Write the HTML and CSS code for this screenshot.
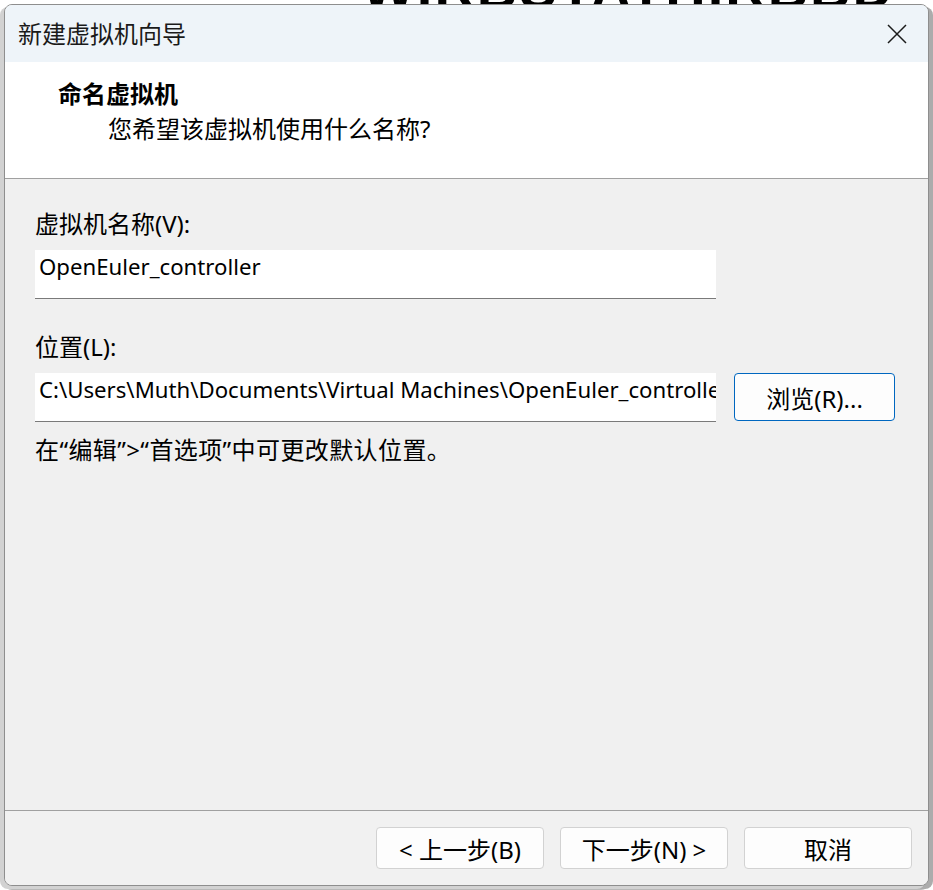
FILE: index.html
```html
<!DOCTYPE html>
<html lang="zh-CN">
<head>
<meta charset="utf-8">
<title>新建虚拟机向导</title>
<link rel="stylesheet" href="styles.css">
</head>
<body>
<div class="behind" aria-hidden="true">WIRBSTATHIRBBD</div>
<div class="window">
  <div class="titlebar">
    <span class="title">新建虚拟机向导</span>
    <svg class="close" width="20" height="20" viewBox="0 0 20 20"><path d="M1 1L19 19M19 1L1 19" stroke="#1b1b1b" stroke-width="1.5" fill="none"/></svg>
  </div>
  <div class="header">
    <div class="h-title">命名虚拟机</div>
    <div class="h-sub">您希望该虚拟机使用什么名称?</div>
  </div>
  <div class="content">
    <div class="label">虚拟机名称(V):</div>
    <div class="row">
      <div class="field">OpenEuler_controller</div>
    </div>
    <div class="label label2">位置(L):</div>
    <div class="row">
      <div class="field">C:\Users\Muth\Documents\Virtual Machines\OpenEuler_controller</div>
      <button class="browse">浏览(R)...</button>
    </div>
    <div class="note">在“编辑”&gt;“首选项”中可更改默认位置。</div>
  </div>
  <div class="footer">
    <button class="btn">&lt; 上一步(B)</button>
    <button class="btn">下一步(N) &gt;</button>
    <button class="btn">取消</button>
  </div>
</div>
</body>
</html>
```
FILE: styles.css
```css
html, body {
  margin: 0;
  padding: 0;
}
body {
  width: 933px;
  height: 890px;
  overflow: hidden;
  background: #ffffff;
  position: relative;
  font-family: "Noto Sans", "Noto Sans CJK SC", sans-serif;
  color: #000;
}
.behind {
  position: absolute;
  left: 362px;
  top: -44px;
  font-family: "Liberation Sans", sans-serif;
  font-weight: bold;
  font-size: 56px;
  letter-spacing: 2px;
  color: #000;
  white-space: nowrap;
}
.window {
  position: relative;
  z-index: 1;
  box-sizing: border-box;
  margin: 4px 0 0 4px;
  width: 925px;
  height: 882px;
  border: 1px solid #8e8e8e;
  border-radius: 8px;
  overflow: hidden;
  background: #f0f0f0;
  display: flex;
  flex-direction: column;
  box-shadow: -4px 3px 0 0 #d2d2d2, 4px 3px 0 0 #acacac, 0 4px 0 0 #b9b9b9;
}
.titlebar {
  height: 57px;
  flex: none;
  background: #eef4f9;
  display: flex;
  align-items: center;
  justify-content: space-between;
  padding: 0 21px 0 13px;
}
.title {
  font-size: 24px;
  color: #1a1a1a;
  line-height: 30px;
}
.close {
  display: block;
}
.header {
  flex: none;
  box-sizing: border-box;
  height: 117px;
  background: #ffffff;
  border-bottom: 1px solid #a0a0a0;
  padding: 14px 0 0 53px;
}
.h-title {
  font-size: 24px;
  line-height: 35px;
  font-weight: bold;
}
.h-sub {
  font-size: 24px;
  line-height: 35px;
  padding-left: 50px;
}
.content {
  flex: 1;
  padding: 29px 0 0 30px;
  background: #f0f0f0;
}
.label {
  font-size: 24px;
  line-height: 32px;
}
.label2 {
  margin-top: 32px;
}
.row {
  display: flex;
  align-items: flex-start;
  gap: 18px;
  margin-top: 10px;
}
.field {
  box-sizing: border-box;
  width: 681px;
  height: 49px;
  background: #ffffff;
  border-bottom: 1px solid #7a7a7a;
  padding: 0 0 0 4px;
  font-size: 22.2px;
  line-height: 34px;
  white-space: nowrap;
  overflow: hidden;
}
.browse {
  box-sizing: border-box;
  width: 161px;
  height: 48px;
  border: 1px solid #0067c0;
  border-radius: 4px;
  background: #fdfdfd;
  font-family: inherit;
  font-size: 24px;
  color: #000;
  padding: 0;
}
.note {
  margin-top: 12px;
  font-size: 24px;
  line-height: 32px;
  letter-spacing: 0.4px;
}
.footer {
  flex: none;
  box-sizing: border-box;
  height: 75px;
  border-top: 1px solid #a0a0a0;
  background: #f1f1f1;
  display: flex;
  justify-content: flex-end;
  align-items: flex-start;
  gap: 16px;
  padding: 16px 16px 0 0;
}
.btn {
  box-sizing: border-box;
  width: 168px;
  height: 42px;
  border: 1px solid #d2d2d2;
  border-radius: 4px;
  background: #fdfdfd;
  font-family: inherit;
  font-size: 24px;
  color: #000;
  padding: 0;
}
```
